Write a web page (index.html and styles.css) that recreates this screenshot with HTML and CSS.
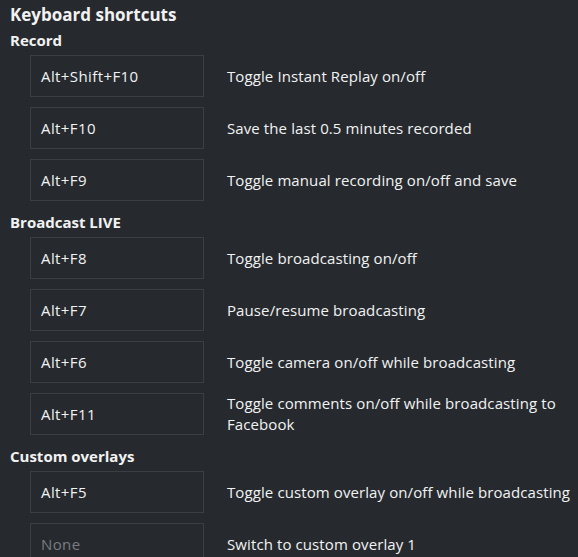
FILE: index.html
```html
<!DOCTYPE html>
<html>
<head>
<meta charset="utf-8">
<link rel="stylesheet" href="styles.css">
</head>
<body>
<div class="page">
  <h1 class="title">Keyboard shortcuts</h1>
  <section class="group">
    <h2 class="group-title">Record</h2>
    <div class="row"><div class="key">Alt+Shift+F10</div><div class="desc">Toggle Instant Replay on/off</div></div>
    <div class="row"><div class="key">Alt+F10</div><div class="desc">Save the last 0.5 minutes recorded</div></div>
    <div class="row"><div class="key">Alt+F9</div><div class="desc">Toggle manual recording on/off and save</div></div>
  </section>
  <section class="group">
    <h2 class="group-title">Broadcast LIVE</h2>
    <div class="row"><div class="key">Alt+F8</div><div class="desc">Toggle broadcasting on/off</div></div>
    <div class="row"><div class="key">Alt+F7</div><div class="desc">Pause/resume broadcasting</div></div>
    <div class="row"><div class="key">Alt+F6</div><div class="desc">Toggle camera on/off while broadcasting</div></div>
    <div class="row"><div class="key">Alt+F11</div><div class="desc">Toggle comments on/off while broadcasting to Facebook</div></div>
  </section>
  <section class="group">
    <h2 class="group-title">Custom overlays</h2>
    <div class="row"><div class="key">Alt+F5</div><div class="desc">Toggle custom overlay on/off while broadcasting</div></div>
    <div class="row"><div class="key empty">None</div><div class="desc">Switch to custom overlay 1</div></div>
  </section>
</div>
</body>
</html>
```
FILE: styles.css
```css
html, body {
  margin: 0;
  padding: 0;
  background: #262a2f;
}
body {
  font-family: "Open Sans", "Noto Sans", sans-serif;
  color: #f2f2f2;
  font-size: 15px;
  overflow: hidden;
}
.page {
  padding: 4px 0 0 10px;
  display: flex;
  flex-direction: column;
}
.title {
  margin: 0;
  font-size: 17px;
  font-weight: 700;
  line-height: 22px;
}
.group {
  display: flex;
  flex-direction: column;
  gap: 10px;
}
.group + .group {
  margin-top: 7px;
}
.group-title {
  margin: 4px 0 -5px 0;
  font-size: 15px;
  font-weight: 700;
  line-height: 20px;
}
.row {
  display: flex;
  align-items: flex-start;
  gap: 23px;
  margin-left: 20px;
}
.key {
  box-sizing: border-box;
  width: 174px;
  height: 42px;
  flex: none;
  border: 1px solid #3b3e42;
  padding: 0 10px;
  display: flex;
  align-items: center;
  line-height: 21px;
  letter-spacing: 0.4px;
}
.key.empty {
  color: #7a7c7f;
}
.desc {
  flex: 1;
  line-height: 21px;
  min-height: 42px;
  display: flex;
  align-items: center;
  max-width: 355px;
  letter-spacing: 0.1px;
}
```
